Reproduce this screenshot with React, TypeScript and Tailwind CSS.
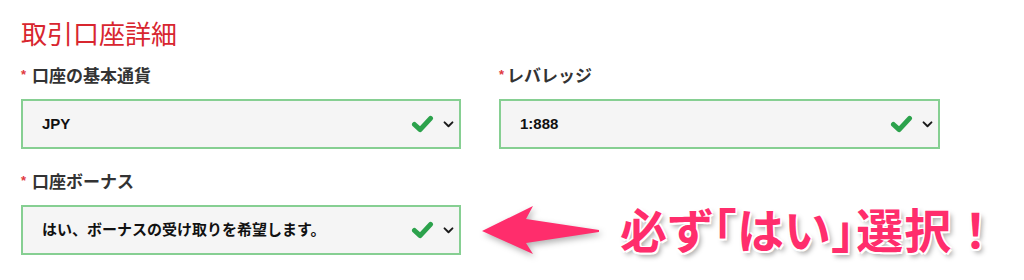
const jp = "font-['Noto_Sans_CJK_JP','Noto_Sans',sans-serif]";

function Chevron() {
  return (
    <svg viewBox="0 0 12 8" className="w-[11px] h-[7px]">
      <polyline
        points="1.5,1.5 6,6 10.5,1.5"
        fill="none"
        stroke="#1a1a1a"
        strokeWidth="2.2"
        strokeLinecap="round"
        strokeLinejoin="round"
      />
    </svg>
  );
}

function Check() {
  return (
    <svg viewBox="0 0 24 19" className="w-[23px] h-[18px] mr-[9px]">
      <polyline
        points="3.5,10 9.5,15.5 20.5,3.5"
        fill="none"
        stroke="#2ca24c"
        strokeWidth="5.2"
        strokeLinecap="round"
        strokeLinejoin="round"
      />
    </svg>
  );
}

function Label({ text, spaced = true }: { text: string; spaced?: boolean }) {
  return (
    <div className={`flex items-center h-6 text-[17px] font-bold text-[#333] ${jp}`}>
      <span className={`text-[#e0393e] text-[13px] font-bold font-['Liberation_Sans',sans-serif] ${spaced ? "mr-[6px]" : "mr-[3px]"}`}>
        *
      </span>
      {text}
    </div>
  );
}

function SelectBox({ value, width }: { value: string; width: string }) {
  return (
    <div
      className={`${width} h-[50px] mt-3 flex items-center bg-[#f5f5f5] border-2 border-[#86cf92] pl-[19px] pr-[5px]`}
    >
      <span className="flex-1 text-[15px] font-bold text-[#111] font-['Liberation_Sans','Noto_Sans_CJK_JP',sans-serif]">
        {value}
      </span>
      <Check />
      <Chevron />
    </div>
  );
}

export default function App() {
  return (
    <div className="w-[1024px] h-[280px] bg-white pl-[21px] pt-[17px] overflow-hidden">
      <h2 className={`text-[26px] leading-8 font-normal text-[#d8262f] ${jp}`}>
        取引口座詳細
      </h2>

      <div className="flex gap-[38px] mt-[14px]">
        <div>
          <Label text="口座の基本通貨" />
          <SelectBox value="JPY" width="w-[440px]" />
        </div>
        <div>
          <Label text="レバレッジ" spaced={false} />
          <SelectBox value="1:888" width="w-[441px]" />
        </div>
      </div>

      <div className="flex mt-5">
        <div>
          <Label text="口座ボーナス" />
          <SelectBox value="はい、ボーナスの受け取りを希望します。" width="w-[440px]" />
        </div>
        <div className="self-end h-[50px] flex items-center ml-[20px]">
          <svg viewBox="0 0 120 50" className="w-[120px] h-[50px] [filter:drop-shadow(2px_3px_3px_rgba(0,0,0,0.3))]">
            <polygon
              points="1,26 52,1 45,14 118,25 118,27 45,38 52,49"
              fill="#ff2d6c"
            />
          </svg>
          <span
            className={`ml-[19px] -mt-[4px] text-[47px] leading-[50px] font-bold text-[#ff2d6c] [font-feature-settings:'palt'] tracking-[1px] ${jp} [text-shadow:1.5px_1.5px_0_#fff,-1.5px_-1.5px_0_#fff,1.5px_-1.5px_0_#fff,-1.5px_1.5px_0_#fff,3px_4px_5px_rgba(0,0,0,0.35)]`}
          >
            必ず「はい」選択 ！
          </span>
        </div>
      </div>
    </div>
  );
}
